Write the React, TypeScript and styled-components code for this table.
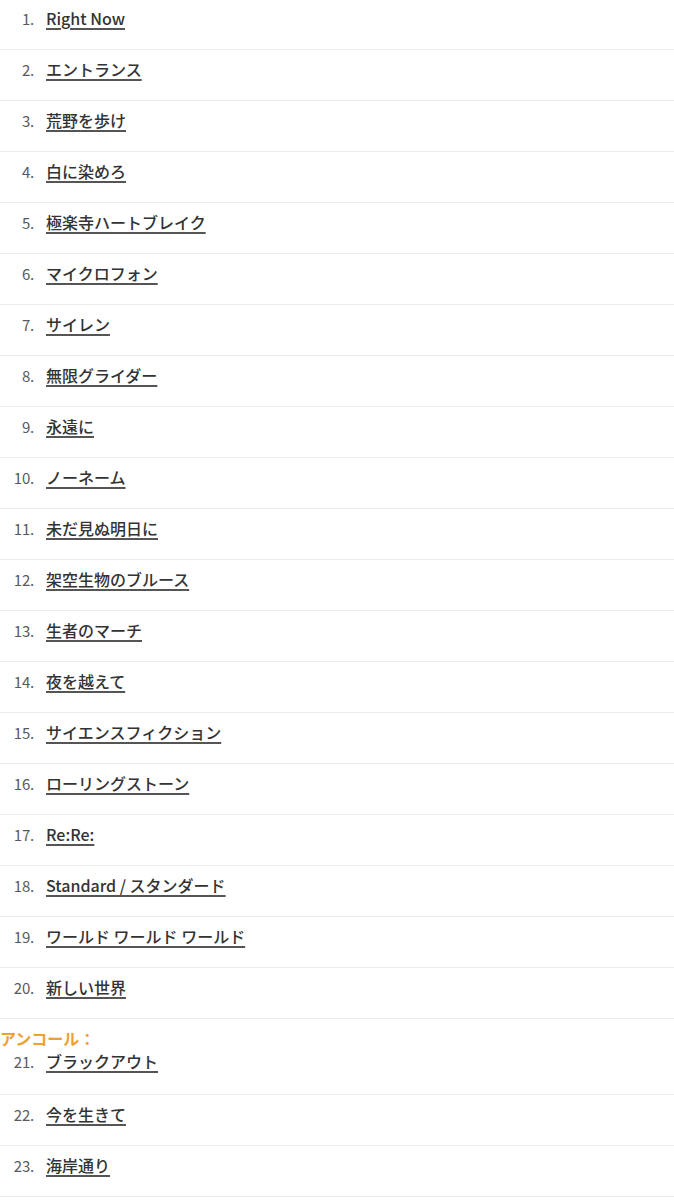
import styled, { createGlobalStyle } from 'styled-components';

const GlobalStyle = createGlobalStyle`
  html, body {
    margin: 0;
    padding: 0;
    background: #fff;
  }
  body {
    font-family: "Noto Sans CJK JP", "Noto Sans", sans-serif;
    color: #333;
  }
`;

const mainSet = [
  'Right Now',
  'エントランス',
  '荒野を歩け',
  '白に染めろ',
  '極楽寺ハートブレイク',
  'マイクロフォン',
  'サイレン',
  '無限グライダー',
  '永遠に',
  'ノーネーム',
  '未だ見ぬ明日に',
  '架空生物のブルース',
  '生者のマーチ',
  '夜を越えて',
  'サイエンスフィクション',
  'ローリングストーン',
  'Re:Re:',
  'Standard / スタンダード',
  'ワールド ワールド ワールド',
  '新しい世界',
];

const encore = ['ブラックアウト', '今を生きて', '海岸通り'];

const SetList = styled.div`
  width: 674px;
  margin-top: -1px;
`;

const Track = styled.div<{ $tight?: boolean }>`
  display: flex;
  align-items: center;
  gap: 12px;
  height: 20px;
  padding: ${(p) => (p.$tight ? '3px 0 23px' : '9px 0 21px')};
  border-bottom: 1px solid #ebebeb;
`;

const Num = styled.span`
  width: 34px;
  text-align: right;
  font-size: 15px;
  color: #5a5a5a;
  letter-spacing: -0.2px;
`;

const Title = styled.a`
  font-size: 16px;
  font-weight: 500;
  color: #333;
  text-decoration: underline;
  text-decoration-color: #555;
  text-decoration-thickness: 1.5px;
  text-underline-offset: 3px;
`;

const EncoreLabel = styled.div`
  padding-top: 9px;
  height: 20px;
  line-height: 20px;
  font-size: 16px;
  font-weight: 700;
  color: #f0a032;
`;

export default function App() {
  return (
    <>
      <GlobalStyle />
      <SetList>
        {mainSet.map((t, i) => (
          <Track key={t}>
            <Num>{i + 1}.</Num>
            <Title>{t}</Title>
          </Track>
        ))}
        <EncoreLabel>アンコール：</EncoreLabel>
        {encore.map((t, i) => (
          <Track key={t} $tight={i === 0}>
            <Num>{mainSet.length + i + 1}.</Num>
            <Title>{t}</Title>
          </Track>
        ))}
      </SetList>
    </>
  );
}
